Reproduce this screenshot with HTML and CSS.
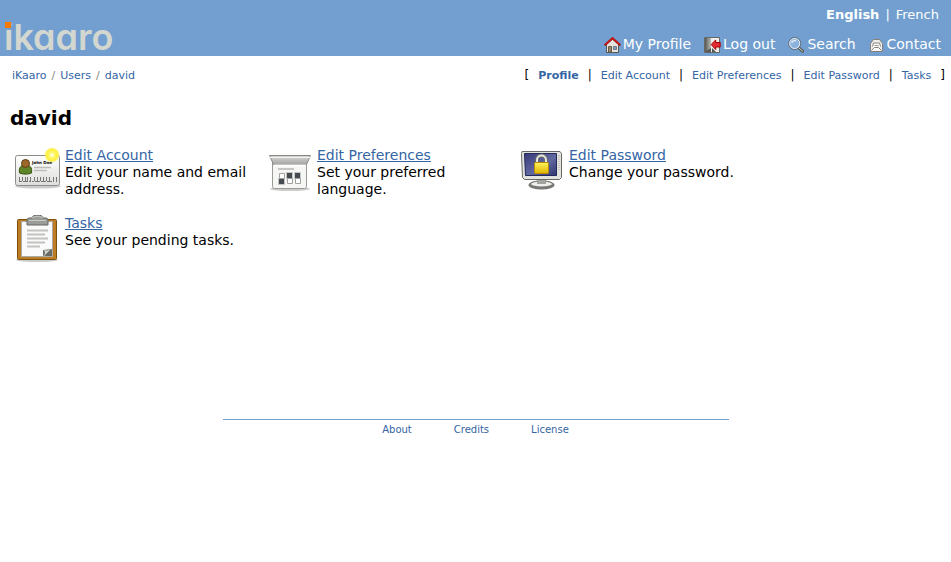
FILE: index.html
```html
<!DOCTYPE html>
<html lang="en">
<head>
<meta charset="utf-8">
<title>david</title>
<link rel="stylesheet" href="styles.css">
</head>
<body>
<header class="header">
  <a class="logo" href="#">ikaaro<span class="logo-dot"></span></a>
  <div class="header-right">
    <nav class="languages" aria-label="Languages"><a class="current" href="#">English</a><span>|</span><a href="#">French</a></nav>
    <nav class="site-menu" aria-label="Site">
      <a href="#"><svg width="17" height="16" viewBox="0 0 17 16"><path d="M2.500 7.500v8h12v-8l-6-5.500z" fill="#e6e4df" stroke="#555753"/><path d="M4.500 15V9.500h3V15z" fill="#9b8770" stroke="#6b5a46"/><path d="M9.500 9.500h3v3h-3z" fill="#729fcf" stroke="#777b7c"/><path d="M.7 8.300 8.500 1.200l7.800 7.100" fill="none" stroke="#a40000" stroke-width="2"/><path d="M1.500 7.500 8.500 1.200l7 6.300" fill="none" stroke="#ef2929"/></svg>My Profile</a>
      <a href="#"><svg width="17" height="16" viewBox="0 0 17 16"><defs><linearGradient id="door"><stop stop-color="#555753"/><stop offset="1" stop-color="#bebfba"/></linearGradient></defs><path d="M.5.5h15v15H.5z" fill="#eeeeec" stroke="#666966"/><path d="M1 1h6v14H1z" fill="url(#door)"/><path d="m1 15 6-4v4zM8 11l4 4H8z" fill="#555753"/><path d="m7.200 7.500 4.500-4.500v2.500h4.500v4.500h-4.500v2.500z" fill="#e32b32" stroke="#a40000"/></svg>Log out</a>
      <a href="#"><svg width="17" height="16" viewBox="0 0 17 16"><path d="m10.500 10.500 4 3.700" stroke="#555753" stroke-width="3" stroke-linecap="round"/><path d="m11 11 3.500 3" stroke="#d3d7cf" stroke-linecap="round"/><circle cx="6.700" cy="6.500" r="6" fill="#8bb2dc" stroke="#636b72"/><circle cx="6.700" cy="6.500" r="5" fill="none" stroke="#e8eef4"/><path d="M4 6c0-2 2-3 4-2" fill="none" stroke="#dce9f6" stroke-width="1.500"/></svg>Search</a>
      <a href="#"><svg width="16" height="16" viewBox="0 0 16 16"><path d="M1.500 6.500 4.500 2.500h6l3 4v8h-12z" fill="#eeeeec" stroke="#85817a"/><path d="m2.500 13.500 3-3h4l3 3" fill="#fff" stroke="#85817a"/><path d="m3.500 9.500 1-3.500h6l1 3.500" fill="#fff" stroke="#85817a"/><path d="M5.500 8.500h4" stroke="#9a9993"/></svg>Contact</a>
    </nav>
  </div>
</header>
<div class="location">
  <nav class="breadcrumb" aria-label="Breadcrumb"><a href="#">iKaaro</a><span>/</span><a href="#">Users</a><span>/</span><a href="#">david</a></nav>
  <nav class="tabs" aria-label="Views"><span>[</span><a class="current" href="#">Profile</a><span>|</span><a href="#">Edit Account</a><span>|</span><a href="#">Edit Preferences</a><span>|</span><a href="#">Edit Password</a><span>|</span><a href="#">Tasks</a><span>]</span></nav>
</div>
<main class="content">
  <h1>david</h1>
  <ul class="actions">
    <li>
      <svg width="48" height="48" viewBox="0 0 48 48"><defs><linearGradient id="card" x2="0" y2="1"><stop stop-color="#fff"/><stop offset="1" stop-color="#dededc"/></linearGradient><radialGradient id="glow"><stop stop-color="#fff"/><stop offset=".35" stop-color="#fff66a"/><stop offset=".7" stop-color="#fcef38"/><stop offset="1" stop-color="#fcef38" stop-opacity="0"/></radialGradient></defs><ellipse cx="25" cy="39.500" rx="23" ry="2" fill="#000" opacity=".2"/><rect x="2.500" y="8.500" width="44" height="30" rx="2" fill="url(#card)" stroke="#8b8d89"/><path d="M6.500 26c-1-6 2-8 6-8s7 2 6 8c-3 1.500-9 1.500-12 0z" fill="#5e8528" stroke="#38540d"/><circle cx="12.500" cy="16.500" r="4" fill="#9d672a" stroke="#613d10"/><path d="M21 20.500h17M21 23.500h13" stroke="#bcbdb9" stroke-width="1.500"/><path d="M6.500 30v5M9.500 30v4M12.500 30v5M14.500 30v4M17.500 30v5M21.500 30v4M24.500 30v5M27.500 30v4M30.500 30v5M33.500 30v4M36.500 30v5M40.500 30v5M43.500 30v5" stroke="#777"/><path d="M7 34.500h34" stroke="#777" stroke-dasharray="2 1"/><text class="card-name" x="19" y="17">John Doe</text><circle cx="39" cy="8" r="8" fill="url(#glow)"/></svg>
      <div><a href="#">Edit Account</a><p>Edit your name and email address.</p></div>
    </li>
    <li>
      <svg width="48" height="48" viewBox="0 0 48 48"><defs><linearGradient id="flap" x2="0" y2="1"><stop stop-color="#d8d8d6"/><stop offset="1" stop-color="#a6a8a4"/></linearGradient></defs><ellipse cx="25" cy="42" rx="20" ry="2" fill="#000" opacity=".2"/><rect x="7.500" y="13.500" width="34" height="28" rx="2" fill="#f6f6f5" stroke="#999b97"/><path d="M4.500 8.500h41l-4 9h-33z" fill="url(#flap)" stroke="#888a85"/><path d="M5 10.500h40" stroke="#f4f4f3"/><path d="M9 18.500h32" stroke="#fff" stroke-width="2"/><path d="M13 22h16" stroke="#c6c7c4" stroke-width="2"/><g fill="#454b50" stroke="#c5c7c4"><path d="M13.500 31.500h6v6h-6zM21.500 25.500h6v6h-6zM29.500 25.500h6v6h-6z"/></g><g fill="#fff" stroke="#a0a29f"><path d="M14.500 26.500h5v5h-5zM22.500 31.500h5v5h-5zM30.500 31.500h5v5h-5z"/></g></svg>
      <div><a href="#">Edit Preferences</a><p>Set your preferred language.</p></div>
    </li>
    <li>
      <svg width="48" height="48" viewBox="0 0 48 48"><defs><linearGradient id="screen" x2="1" y2="1"><stop stop-color="#363b79"/><stop offset=".55" stop-color="#6268a0"/><stop offset="1" stop-color="#30366f"/></linearGradient><linearGradient id="lock" x2="0" y2="1"><stop stop-color="#fff45a"/><stop offset="1" stop-color="#dfb300"/></linearGradient></defs><ellipse cx="24.500" cy="38" rx="13" ry="4.500" fill="#777975"/><ellipse cx="24.500" cy="37" rx="11" ry="3" fill="#eeeeec" stroke="#73766f"/><path d="M20 32h9v5h-9z" fill="#a2a49f"/><path d="M5 4.500h38l1.500 2v24l-2 2h-35l-2-2-1-24z" fill="#e2e3df" stroke="#666963"/><path d="M7.500 6.500h32v22h-31z" fill="url(#screen)" stroke="#232958"/><path d="M42 8v16" stroke="#aaa" stroke-dasharray="1 1"/><path d="M20 16v-3c0-6 9-6 9 0v3" fill="none" stroke="#666963" stroke-width="4"/><path d="M20 16v-3c0-6 9-6 9 0v3" fill="none" stroke="#e6e7e4" stroke-width="2"/><rect x="17.500" y="15.500" width="14" height="11" rx="1" fill="url(#lock)" stroke="#b58900"/></svg>
      <div><a href="#">Edit Password</a><p>Change your password.</p></div>
    </li>
    <li>
      <svg width="48" height="48" viewBox="0 0 48 48"><ellipse cx="24" cy="45" rx="21" ry="2" fill="#000" opacity=".2"/><rect x="4.500" y="4.500" width="39" height="40" rx="1" fill="#bd7d23" stroke="#80500d"/><path d="M8.500 6.500h31v35h-31z" fill="#fafafa" stroke="#aaa"/><path d="M14 15.500h21M14 19.500h18M14 23.500h21M14 27.500h18M14 31.500h13" stroke="#c2c3c0" stroke-width="2"/><path d="M30 41v-6l9-1v7z" fill="#686b67"/><path d="M30 41c3-2 2-4 1-6 3 1 6 0 8-2l-8 8" fill="#d3d7cf"/><path d="M19 3c0-4 11-4 11 0h3c2 0 2 2 2 3v4H14V6c0-1 0-3 2-3z" fill="#9b9d98" stroke="#646761"/><path d="M19 3c1-2 10-2 11 0M16 5.500h17" fill="none" stroke="#c9cbc6"/></svg>
      <div><a href="#">Tasks</a><p>See your pending tasks.</p></div>
    </li>
  </ul>
</main>
<footer class="footer"><a href="#">About</a><a href="#">Credits</a><a href="#">License</a></footer>
</body>
</html>
```
FILE: styles.css
```css
body {
  margin: 0;
  background: #fff;
  color: #000;
  font: 14px/17px "DejaVu Sans", sans-serif;
}

a {
  color: #3465a4;
  text-decoration: none;
}

.header {
  display: flex;
  justify-content: space-between;
  height: 56px;
  background: #729fcf;
}

.header a {
  color: #fff;
}

.header .logo {
  position: relative;
  align-self: flex-end;
  margin: 0 0 1px 4px;
  color: #d3d7cf;
  font: 600 36px/36px Inter, sans-serif;
  font-feature-settings: "cv11";
}

.logo-dot {
  position: absolute;
  top: 3px;
  left: 1px;
  width: 6px;
  height: 6px;
  background: #f57900;
}

.header-right {
  display: flex;
  flex-direction: column;
  justify-content: space-between;
  align-items: flex-end;
  padding: 6px 10px 3px 0;
}

.languages {
  display: flex;
  gap: 6px;
  padding-right: 2px;
  color: #fff;
  font-size: 13px;
}

.current {
  font-weight: bold;
}

.site-menu {
  display: flex;
  gap: 13px;
}

.site-menu a {
  display: flex;
  align-items: center;
  gap: 2px;
}

.location {
  display: flex;
  justify-content: space-between;
  padding: 11px 6px 0 12px;
  font-size: 11px;
}

.breadcrumb {
  display: flex;
  gap: 5px;
  color: #888a85;
}

.tabs {
  display: flex;
  gap: 9px;
}

.tabs span {
  font-size: 12px;
}

.content {
  min-height: 335px;
}

h1 {
  margin: 0;
  padding: 22px 10px 16px;
  font-size: 20px;
  line-height: 25px;
}

.actions {
  display: grid;
  grid-template-columns: repeat(auto-fill, 252px);
  row-gap: 17px;
  margin: 0;
  padding: 0 0 0 13px;
  list-style: none;
}

.actions li {
  display: flex;
  gap: 4px;
  padding-right: 10px;
}

.actions svg {
  flex: none;
}

.actions a {
  text-decoration: underline;
}

.actions p {
  margin: 0;
}

.card-name {
  font: bold 4px "DejaVu Sans", sans-serif;
}

.footer {
  display: flex;
  justify-content: center;
  gap: 42px;
  box-sizing: border-box;
  max-width: 506px;
  margin: 0 auto;
  padding-top: 1px;
  border-top: 1px solid #729fcf;
  font-size: 10px;
}
```
